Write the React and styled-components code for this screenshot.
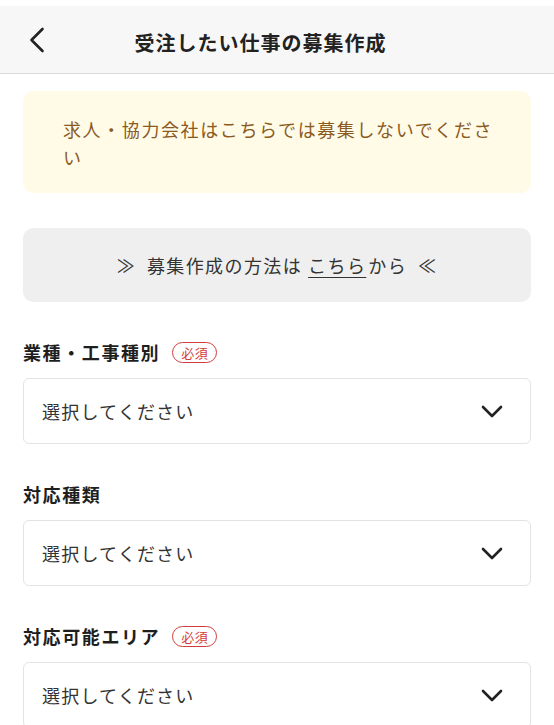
import React from "react";
import styled, { createGlobalStyle } from "styled-components";

const GlobalStyle = createGlobalStyle`
    body {
        margin: 0;
        background: #fff;
        font-family: "Noto Sans CJK JP", "Noto Sans", sans-serif;
        color: #222;
    }
`;

const Page = styled.div`
    padding-top: 6px;
`;

const Header = styled.header`
    display: flex;
    align-items: center;
    height: 67px;
    background: #f7f7f7;
    border-bottom: 1px solid #dadada;
`;

const BackButton = styled.button`
    display: flex;
    align-items: center;
    justify-content: center;
    width: 44px;
    height: 44px;
    margin-left: 15px;
    padding: 0;
    border: none;
    background: none;
    cursor: pointer;
`;

const Title = styled.h1`
    flex: 1;
    margin: 0;
    padding-right: 92px;
    text-align: center;
    font-size: 20px;
    font-weight: 700;
    letter-spacing: 1px;
    line-height: 28px;
    color: #222;
    transform: translateY(3px);
`;

const Content = styled.main`
    padding: 17px 23px 0 23px;
`;

const Notice = styled.div`
    padding: 24px 34px 22px 40px;
    background: #fffbe7;
    border-radius: 10px;
    color: #8b5a1f;
    font-size: 18px;
    line-height: 28px;
    letter-spacing: 1.6px;
`;

const GuideBox = styled.div`
    margin-top: 35px;
    padding: 23px 0;
    background: #efefef;
    border-radius: 10px;
    text-align: center;
    font-size: 18px;
    line-height: 28px;
    letter-spacing: 1.4px;
    color: #333;
`;

const GuideLink = styled.a`
    color: #333;
    text-decoration: underline;
    text-underline-offset: 4px;
    margin: 0 2px 0 6px;
`;

const Field = styled.section`
    margin-top: 37px;
`;

const LabelRow = styled.div`
    display: flex;
    align-items: center;
    gap: 12px;
    height: 26px;
    margin-bottom: 13px;
`;

const Label = styled.span`
    font-size: 18px;
    font-weight: 700;
    letter-spacing: 1.6px;
    color: #1e1e1e;
`;

const Badge = styled.span`
    display: inline-flex;
    align-items: center;
    justify-content: center;
    width: 45px;
    height: 21px;
    box-sizing: border-box;
    border: 1.6px solid #d23c3c;
    border-radius: 12px;
    color: #d23c3c;
    font-size: 13px;
    letter-spacing: 0.5px;
`;

const Select = styled.div`
    display: flex;
    align-items: center;
    justify-content: space-between;
    height: 66px;
    box-sizing: border-box;
    padding: 0 27px 0 18px;
    border: 1px solid #e3e3e3;
    border-radius: 6px;
    background: #fff;
`;

const Placeholder = styled.span`
    font-size: 18px;
    letter-spacing: 1.2px;
    color: #333;
`;

const Chevron = () => (
    <svg width="22" height="13" viewBox="0 0 22 13">
        <path d="M2 2 L11 11 L20 2" fill="none" stroke="#222" strokeWidth="2.6" strokeLinecap="round" strokeLinejoin="round" />
    </svg>
);

const BackIcon = () => (
    <svg width="16" height="26" viewBox="0 0 16 26">
        <path d="M13.5 2 L2.5 13 L13.5 24" fill="none" stroke="#222" strokeWidth="2.6" strokeLinecap="round" strokeLinejoin="round" />
    </svg>
);

const fields = [
    { label: "業種・工事種別", required: true },
    { label: "対応種類", required: false },
    { label: "対応可能エリア", required: true },
];

const App = () => {
    return (
        <Page>
            <GlobalStyle />
            <Header>
                <BackButton aria-label="戻る">
                    <BackIcon />
                </BackButton>
                <Title>受注したい仕事の募集作成</Title>
            </Header>
            <Content>
                <Notice>求人・協力会社はこちらでは募集しないでください</Notice>
                <GuideBox>
                    ≫&nbsp; 募集作成の方法は<GuideLink href="#">こちら</GuideLink>から&nbsp; ≪
                </GuideBox>
                {fields.map((f) => (
                    <Field key={f.label}>
                        <LabelRow>
                            <Label>{f.label}</Label>
                            {f.required && <Badge>必須</Badge>}
                        </LabelRow>
                        <Select>
                            <Placeholder>選択してください</Placeholder>
                            <Chevron />
                        </Select>
                    </Field>
                ))}
            </Content>
        </Page>
    );
};

export default App;
